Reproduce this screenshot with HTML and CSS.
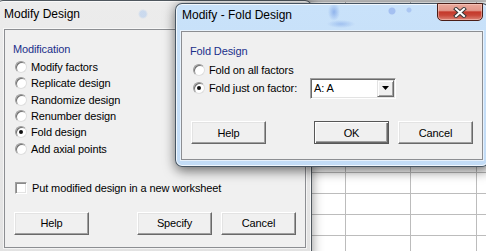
FILE: index.html
```html
<!DOCTYPE html>
<html lang="en">
<head>
    <meta charset="UTF-8">
    <title>Modify - Fold Design</title>
    <link rel="stylesheet" href="styles.css">
</head>
<body>
    <div class="sheet"></div>

    <!-- parent dialog (inactive) -->
    <div class="win win-modify">
        <div class="titlebar">
            <span class="title">Modify Design</span>
        </div>
        <div class="client">
            <div class="group-label">Modification</div>
            <ul class="options">
                <li><span class="radio"></span>Modify factors</li>
                <li><span class="radio"></span>Replicate design</li>
                <li><span class="radio"></span>Randomize design</li>
                <li><span class="radio"></span>Renumber design</li>
                <li><span class="radio on"></span>Fold design</li>
                <li><span class="radio"></span>Add axial points</li>
            </ul>
            <div class="check-row"><span class="checkbox"></span>Put modified design in a new worksheet</div>
            <div class="buttons">
                <button class="btn">Help</button>
                <button class="btn gap-wide">Specify</button>
                <button class="btn gap-narrow">Cancel</button>
            </div>
        </div>
    </div>

    <!-- child dialog (active) -->
    <div class="win win-fold">
        <div class="titlebar">
            <span class="title">Modify - Fold Design</span>
            <span class="close">
                <svg width="14" height="11" viewBox="0 0 14 11">
                    <path d="M3 2 L11 9 M11 2 L3 9" stroke="#3a3a3a" stroke-width="4" stroke-linecap="square"/>
                    <path d="M3 2 L11 9 M11 2 L3 9" stroke="#fff" stroke-width="2" stroke-linecap="square"/>
                </svg>
            </span>
        </div>
        <div class="client">
            <div class="group-label">Fold Design</div>
            <ul class="options">
                <li><span class="radio"></span>Fold on all factors</li>
                <li>
                    <span class="radio on"></span><span class="factor-label">Fold just on factor:</span>
                    <span class="combo">
                        <span class="combo-value">A: A</span>
                        <span class="combo-arrow">
                            <svg width="7" height="4" viewBox="0 0 7 4"><polygon points="0,0 7,0 3.5,4" fill="#000"/></svg>
                        </span>
                    </span>
                </li>
            </ul>
            <div class="buttons">
                <button class="btn">Help</button>
                <button class="btn btn-default gap-wide">OK</button>
                <button class="btn gap-tight">Cancel</button>
            </div>
        </div>
    </div>
</body>
</html>
```

FILE: styles.css
```css
* {
    margin: 0;
    padding: 0;
    box-sizing: border-box;
}

html, body {
    width: 486px;
    height: 251px;
    overflow: hidden;
}

body {
    position: relative;
    background: #fff;
    font-family: "Liberation Sans", Arial, sans-serif;
    font-size: 11px;
    letter-spacing: -0.12px;
    color: #000;
}

/* worksheet behind the dialogs */
.sheet {
    position: absolute;
    left: 280px;
    top: 0;
    width: 206px;
    height: 251px;
    border-top: 2px solid #c8c8c8;
    background-image:
        linear-gradient(to bottom, transparent 20px, #bcbcbc 20px),
        linear-gradient(to right, transparent 65px, #bcbcbc 65px, #bcbcbc 66px, transparent 66px, transparent 130px, #bcbcbc 130px);
    background-size: 100% 21px, 131px 100%;
    background-position: 0 3px, 0 0;
}

/* window frames */
.win {
    position: absolute;
    border: 1px solid rgba(30, 40, 50, 0.75);
    border-radius: 7px 7px 0 0;
}

.win-modify {
    left: -4px;
    top: 0;
    width: 316px;
    height: 262px;
    background:
        radial-gradient(circle at 146px 13px, rgba(170, 200, 240, 0.5) 0 3px, transparent 5px),
        linear-gradient(#ececec, #e2e2e2);
    box-shadow: 0 0 12px rgba(0, 0, 0, 0.45), inset 0 0 0 1px rgba(255, 255, 255, 0.7);
}

.win-fold {
    left: 175px;
    top: 3px;
    width: 314px;
    height: 164px;
    border-radius: 7px;
    background:
        radial-gradient(ellipse 6px 9px at 158px 8px, rgba(120, 160, 230, 0.7), transparent),
        radial-gradient(ellipse 14px 4px at 165px 20px, rgba(120, 160, 230, 0.5), transparent),
        radial-gradient(circle at 216px 7px, rgba(140, 170, 235, 0.6) 0 3px, transparent 4px),
        radial-gradient(circle at 233px 6px, rgba(140, 170, 235, 0.5) 0 2px, transparent 3px),
        linear-gradient(#c9e2fa, #c3dcf6);
    box-shadow: 1px 3px 12px 1px rgba(0, 0, 0, 0.55), inset 0 0 0 1px rgba(255, 255, 255, 0.75);
}

.titlebar {
    display: flex;
    align-items: flex-start;
    font-size: 12px;
    line-height: 15px;
    letter-spacing: 0;
}

.win-modify .titlebar {
    height: 28px;
    padding: 6px 0 0 7px;
}

.win-fold .titlebar {
    height: 27px;
    padding: 4px 0 0 6px;
}

.close {
    display: flex;
    align-items: center;
    justify-content: center;
    width: 46px;
    height: 18px;
    margin: -5px 5px 0 auto;
    border: 1px solid #4a1e18;
    border-radius: 0 0 5px 5px;
    background: linear-gradient(#eaa99c, #e2978a 40%, #c4392b 50%, #c84638 70%, #dc8577);
    box-shadow: inset 0 0 0 1px rgba(255, 220, 210, 0.45);
}

.client {
    background: #f0f0f0;
    border: 1px solid #8c8e92;
    box-shadow: 0 0 0 1px rgba(255, 255, 255, 0.6);
}

.win-modify .client {
    width: 302px;
    height: 219px;
    margin-left: 7px;
    padding: 13px 0 0 8px;
}

.win-fold .client {
    width: 302px;
    height: 129px;
    margin-left: 5px;
    padding: 13px 0 0 8px;
}

.group-label {
    line-height: 13px;
    color: #1b2f8a;
}

.options {
    list-style: none;
    margin-top: 3px;
}

.options li {
    display: flex;
    align-items: center;
    white-space: nowrap;
}

.win-modify .options {
    padding-left: 2px;
}

.win-modify .options li {
    height: 16.3px;
}

.win-fold .options {
    padding-left: 3px;
}

.win-fold .options li {
    height: 18px;
}

.radio {
    position: relative;
    flex: none;
    width: 12px;
    height: 12px;
    margin-right: 4px;
    border-radius: 50%;
    border: 1px solid;
    border-color: #9a9a9a #dedede #dedede #9a9a9a;
    background: #fff;
    box-shadow: inset 1px 1px 0 #707070;
}

.radio.on::after {
    content: "";
    position: absolute;
    left: 3px;
    top: 3px;
    width: 4px;
    height: 4px;
    border-radius: 50%;
    background: #111;
}

.check-row {
    display: flex;
    align-items: center;
    height: 16px;
    margin-top: 23px;
    padding-left: 2px;
}

.checkbox {
    flex: none;
    width: 12px;
    height: 12px;
    margin-right: 5px;
    background: #fff;
    border: 1px solid;
    border-color: #a0a0a0 #fff #fff #a0a0a0;
    box-shadow: inset 1px 1px #8a8a8a, inset -1px -1px #e3e3e3;
}

.factor-label {
    width: 101px;
}

.combo {
    display: flex;
    width: 86px;
    height: 21px;
    background: #fff;
    border: 1px solid;
    border-color: #a0a0a0 #fff #fff #a0a0a0;
    box-shadow: inset 1px 1px #696969, inset -1px -1px #e3e3e3;
}

.combo-value {
    flex: 1;
    padding: 3px 0 0 3px;
    line-height: 13px;
}

.combo-arrow {
    display: flex;
    align-items: center;
    justify-content: center;
    width: 17px;
    height: 17px;
    margin: 1px 1px 0 0;
    background: #f0f0f0;
    border: 1px solid;
    border-color: #e3e3e3 #696969 #696969 #e3e3e3;
    box-shadow: inset 1px 1px #fff, inset -1px -1px #a0a0a0;
}

.buttons {
    display: flex;
    padding-left: 1px;
}

.win-modify .buttons {
    margin-top: 16px;
}

.win-fold .buttons {
    margin-top: 24px;
}

.btn {
    width: 75px;
    height: 23px;
    font: inherit;
    letter-spacing: inherit;
    color: #000;
    background: #f0f0f0;
    border: 1px solid;
    border-color: #fff #696969 #696969 #fff;
    box-shadow: inset -1px -1px #a0a0a0, inset 1px 1px #e3e3e3;
}

.btn-default {
    border-color: #575757;
    box-shadow: inset 1px 1px #fff, inset -1px -1px #696969, inset -2px -2px #a0a0a0;
}

.gap-wide {
    margin-left: 48px;
}

.gap-narrow {
    margin-left: 9px;
}

.gap-tight {
    margin-left: 9px;
}
```
